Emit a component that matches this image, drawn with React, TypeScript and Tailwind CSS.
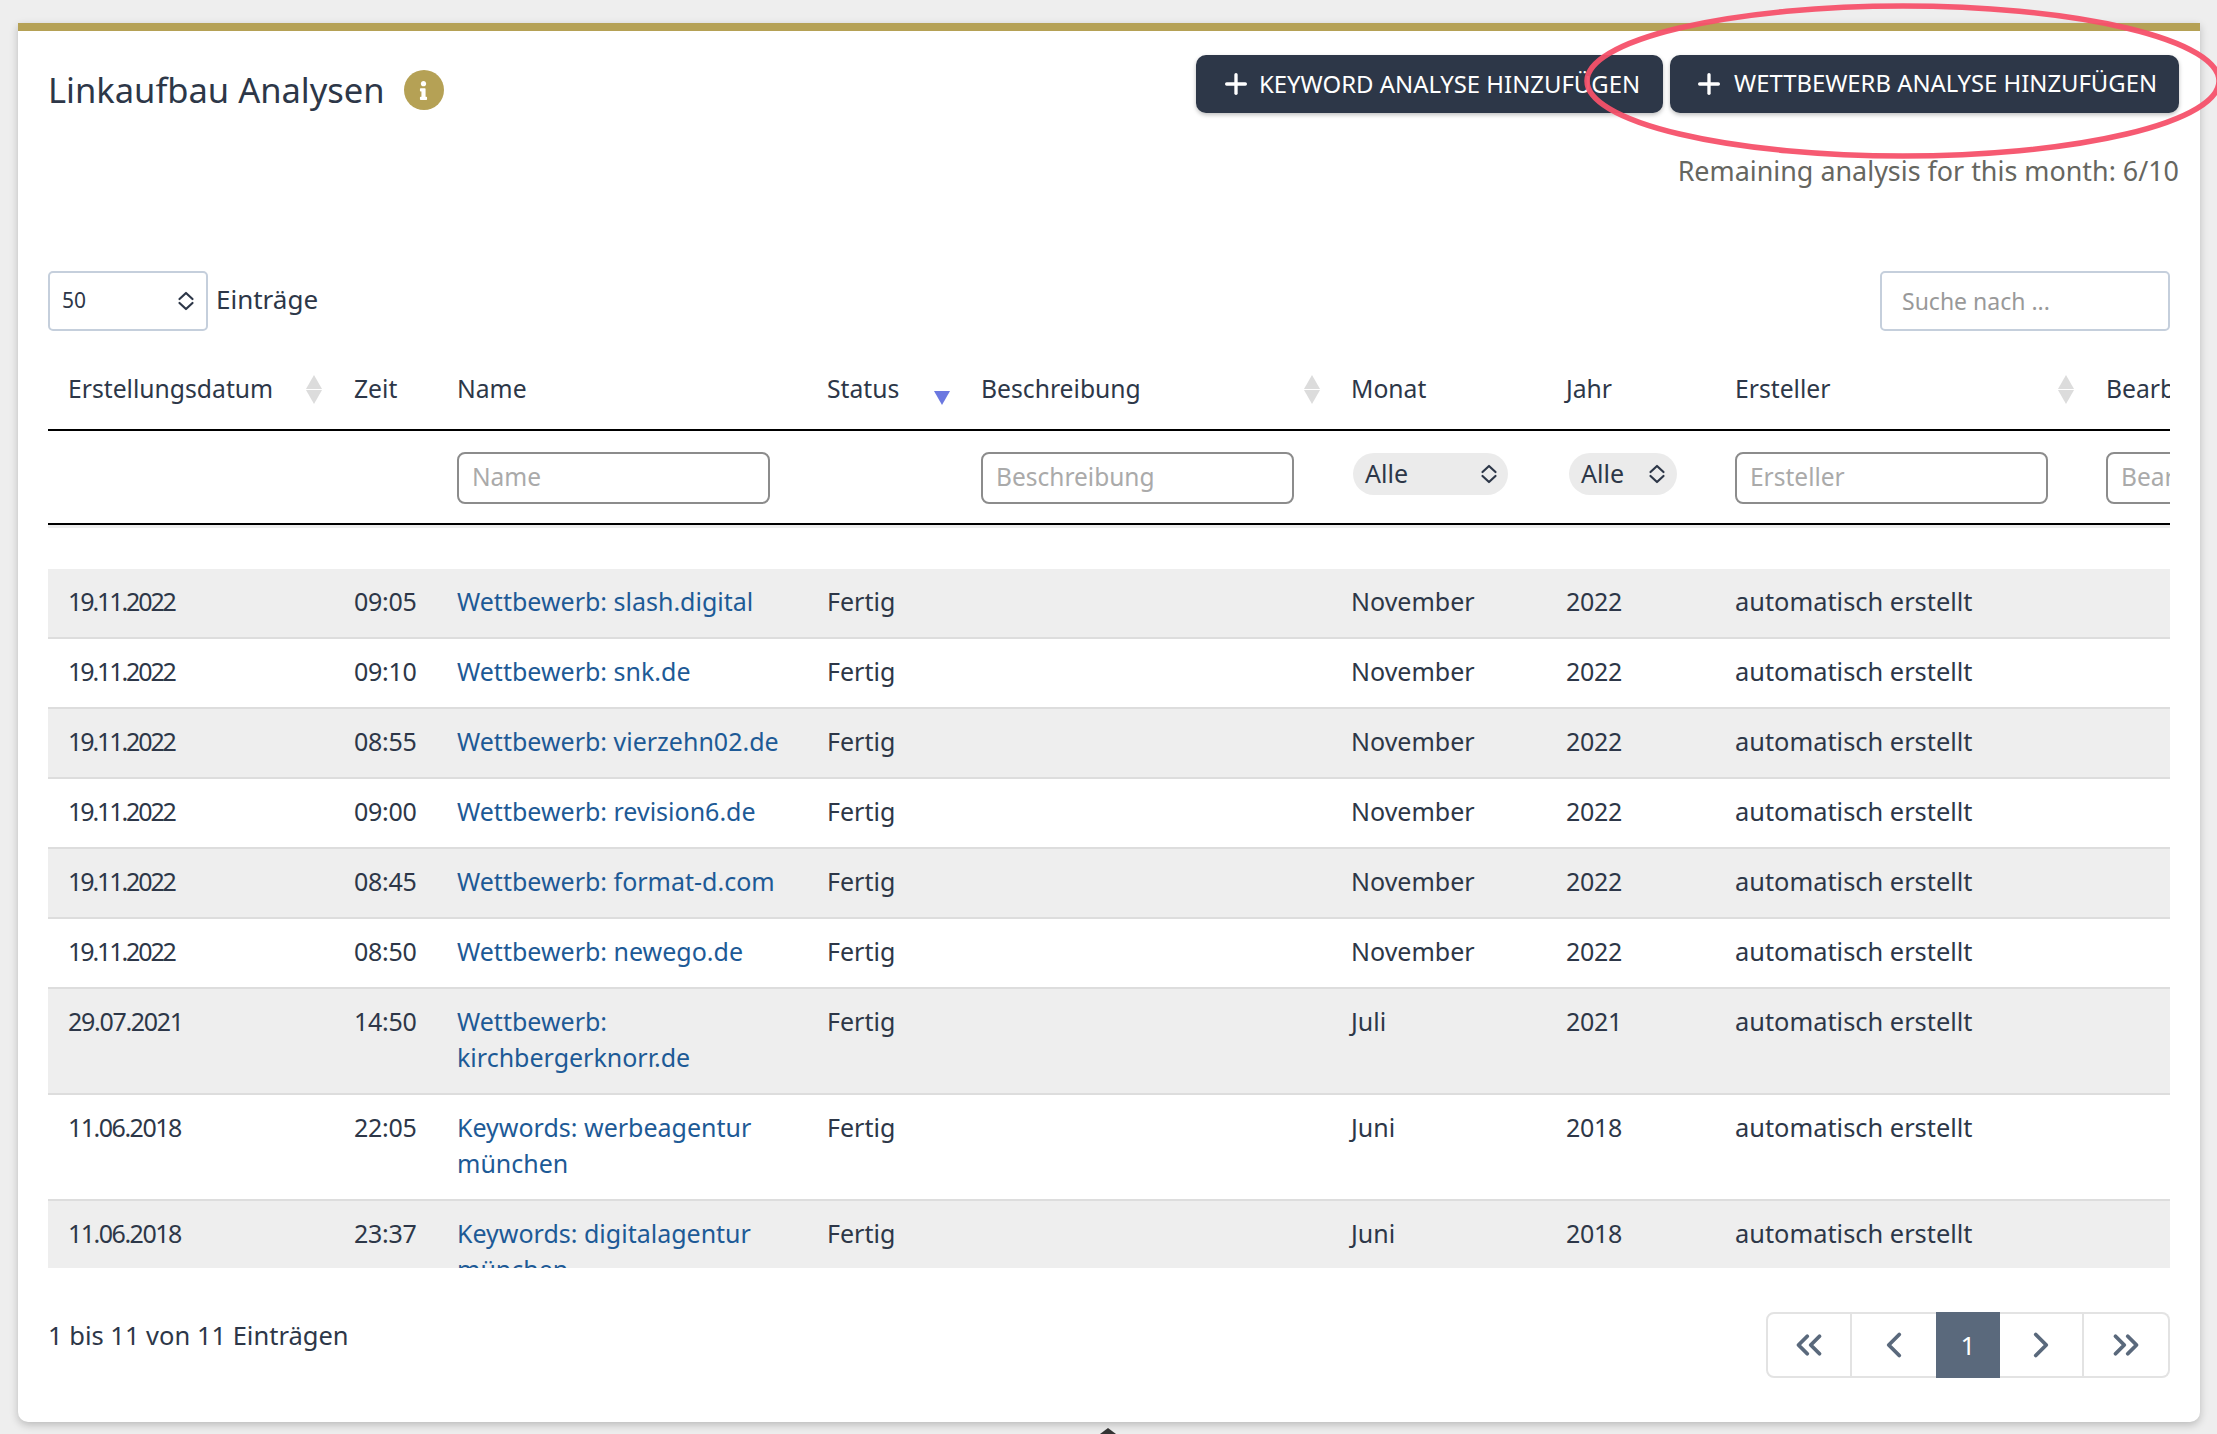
import React from "react";
import { Plus, ChevronsLeft, ChevronLeft, ChevronRight, ChevronsRight } from "lucide-react";
import { FaInfo } from "react-icons/fa";

const rows = [
  ["19.11.2022", "09:05", "Wettbewerb: slash.digital", "November", "2022"],
  ["19.11.2022", "09:10", "Wettbewerb: snk.de", "November", "2022"],
  ["19.11.2022", "08:55", "Wettbewerb: vierzehn02.de", "November", "2022"],
  ["19.11.2022", "09:00", "Wettbewerb: revision6.de", "November", "2022"],
  ["19.11.2022", "08:45", "Wettbewerb: format-d.com", "November", "2022"],
  ["19.11.2022", "08:50", "Wettbewerb: newego.de", "November", "2022"],
  ["29.07.2021", "14:50", "Wettbewerb: kirchbergerknorr.de", "Juli", "2021"],
  ["11.06.2018", "22:05", "Keywords: werbeagentur münchen", "Juni", "2018"],
  ["11.06.2018", "23:37", "Keywords: digitalagentur münchen", "Juni", "2018"],
];

function UpDown({ className }: { className?: string }) {
  return (
    <svg width="18" height="20" viewBox="0 0 18 20" fill="none" stroke="#2d3748" strokeWidth="2.2" strokeLinecap="round" strokeLinejoin="round" className={className}>
      <path d="M2.5 8 9 2 15.5 8M2.5 12 9 18 15.5 12" />
    </svg>
  );
}

function Sort({ active }: { active?: boolean }) {
  return (
    <svg width="16" height="30" viewBox="0 0 16 30" className="shrink-0">
      {!active && <path d="M8 0 16 14H0Z" fill="#dcdcdc" />}
      {active ? <path d="M0 16H16L8 30Z" fill="#6b78e0" /> : <path d="M0 15H16L8 29Z" fill="#dcdcdc" />}
    </svg>
  );
}

function Head({ label, sort, active, w }: { label: string; sort?: boolean; active?: boolean; w?: string }) {
  return (
    <th className="h-[100px] align-bottom border-b-2 border-black pl-[20px] pb-[22px] text-left text-[24.7px] font-normal">
      <div className={`relative leading-[36px] ${w ?? ""}`}>
        {label}
        {sort && (
          <span className={`absolute top-[4px] ${w === "w-[262px]" ? "left-[238px]" : w === "w-[117px]" ? "left-[107px]" : "left-[323px]"}`}>
            <Sort active={active} />
          </span>
        )}
      </div>
    </th>
  );
}

function Filter({ placeholder }: { placeholder: string }) {
  return (
    <th className="border-b-2 border-black pl-[20px] text-left font-normal align-top pt-[21px]">
      <input
        readOnly
        placeholder={placeholder}
        className="h-[52px] w-[313px] rounded-[8px] border-2 border-[#8c8c8c] px-[13px] pb-[3px] text-[24.5px] placeholder:text-[#aaaaaa] outline-none"
      />
    </th>
  );
}

function Pill({ w, gap }: { w: string; gap: string }) {
  return (
    <div className={`flex h-[42px] items-center rounded-full bg-[#ebebeb] pl-[12px] text-[25px] font-normal text-[#2d3748] ${w}`}>
      <span>Alle</span>
      <UpDown className={gap} />
    </div>
  );
}

function Blank() {
  return <th className="border-b-2 border-black" />;
}

function dateTrack(d: string) {
  if (d.startsWith("19")) return "tracking-[-2.1px]";
  if (d.startsWith("29")) return "tracking-[-1.3px]";
  return "tracking-[-1.5px]";
}

const cell = "border-b-2 border-[#dddddd] pt-[14px] pb-[18px] pl-[20px] align-top leading-[36px]";

export default function App() {
  return (
    <div className="relative h-[1434px] w-[2217px] overflow-hidden bg-[#eeeeee] pl-[18px] pt-[23px] text-[25px] text-[#2d3748] [font-family:'Noto_Sans',sans-serif]">
      <div className="h-[1399px] w-[2182px] rounded-b-[10px] border-t-[8px] border-[#b5a155] bg-white pl-[30px] pr-[21px] pt-[24px] shadow-[0_3px_8px_rgba(0,0,0,0.22)]">
        <div className="flex items-start justify-between">
          <div className="flex h-[70px] items-center gap-[19px]">
            <h1 className="text-[34.5px] font-normal leading-[44px]">Linkaufbau Analysen</h1>
            <span className="flex h-[40px] w-[40px] items-center justify-center rounded-full bg-[#b5a155] text-white">
              <FaInfo size={19} />
            </span>
          </div>
          <div className="flex gap-[7px]">
            <button className="flex h-[58px] w-[467px] items-center gap-[7px] rounded-[10px] bg-[#2d3748] pl-[24px] text-[23.9px] text-white shadow-[0_2px_4px_rgba(0,0,0,0.25)]">
              <Plus size={32} strokeWidth={2.5} />
              <span>KEYWORD ANALYSE HINZUFÜGEN</span>
            </button>
            <button className="flex h-[58px] w-[509px] items-center gap-[9px] rounded-[10px] bg-[#2d3748] pl-[23px] text-[23.85px] text-white shadow-[0_2px_4px_rgba(0,0,0,0.25)]">
              <Plus size={32} strokeWidth={2.5} />
              <span>WETTBEWERB ANALYSE HINZUFÜGEN</span>
            </button>
          </div>
        </div>
        <div className="mt-[28px] text-right text-[26.9px] leading-[36px] text-[#666660]">Remaining analysis for this month: 6/10</div>

        <div className="mr-[9px] mt-[82px] flex items-center justify-between">
          <div className="flex items-center gap-[8px]">
            <div className="flex h-[60px] w-[160px] items-center justify-between rounded-[5px] border-2 border-[#c5cfdc] pl-[12px] pr-[11px] text-[21px]">
              <span>50</span>
              <UpDown />
            </div>
            <span className="pb-[3px] text-[26px]">Einträge</span>
          </div>
          <input
            readOnly
            placeholder="Suche nach ..."
            className="h-[60px] w-[290px] rounded-[5px] border-2 border-[#c5cfdc] px-[20px] text-[23px] placeholder:text-[#999999] outline-none"
          />
        </div>

        <div className="mr-[9px] h-[937px] overflow-hidden">
          <table className="w-[2338px] table-fixed border-separate border-spacing-0">
            <colgroup>
              <col className="w-[286px]" />
              <col className="w-[103px]" />
              <col className="w-[370px]" />
              <col className="w-[154px]" />
              <col className="w-[370px]" />
              <col className="w-[215px]" />
              <col className="w-[169px]" />
              <col className="w-[371px]" />
              <col className="w-[300px]" />
            </colgroup>
            <thead>
              <tr>
                <Head label="Erstellungsdatum" sort w="w-[262px]" />
                <Head label="Zeit" />
                <Head label="Name" />
                <Head label="Status" sort active w="w-[117px]" />
                <Head label="Beschreibung" sort w="w-[347px]" />
                <Head label="Monat" />
                <Head label="Jahr" />
                <Head label="Ersteller" sort w="w-[347px]" />
                <Head label="Bearbeiter" />
              </tr>
              <tr className="h-[94px]">
                <Blank />
                <Blank />
                <Filter placeholder="Name" />
                <Blank />
                <Filter placeholder="Beschreibung" />
                <th className="border-b-2 border-black pl-[22px] align-top pt-[22px]">
                  <Pill w="w-[155px]" gap="ml-[72px]" />
                </th>
                <th className="border-b-2 border-black pl-[23px] align-top pt-[22px]">
                  <Pill w="w-[108px]" gap="ml-[24px]" />
                </th>
                <Filter placeholder="Ersteller" />
                <Filter placeholder="Bearbeiter" />
              </tr>
            </thead>
            <tbody>
              <tr>
                <td colSpan={9} className="h-[44px] p-0 align-top">
                  <div className="h-[3px] bg-[#eeeeee]" />
                </td>
              </tr>
              {rows.map((r, i) => (
                <tr key={i} className={i % 2 === 0 ? "bg-[#eeeeee]" : "bg-white"}>
                  <td className={`${cell} ${dateTrack(r[0])}`}>{r[0]}</td>
                  <td className={`${cell} tracking-[-0.3px]`}>{r[1]}</td>
                  <td className={`${cell} pr-[20px] text-[#1d5a96]`}>{r[2]}</td>
                  <td className={cell}>Fertig</td>
                  <td className={cell} />
                  <td className={cell}>{r[3]}</td>
                  <td className={`${cell} tracking-[-0.3px]`}>{r[4]}</td>
                  <td className={`${cell} text-[25.4px]`}>automatisch erstellt</td>
                  <td className="border-b-2 border-[#dddddd]" />
                </tr>
              ))}
            </tbody>
          </table>
        </div>

        <div className="mr-[9px] mt-[44px] flex items-start justify-between">
          <span className="pt-[5px] text-[25.5px] leading-[36px]">1 bis 11 von 11 Einträgen</span>
          <div className="flex h-[66px] w-[404px] items-stretch text-[#5a697c]">
            <span className="flex w-[86px] items-center justify-center rounded-l-[8px] border-2 border-[#e3e3e3]">
              <ChevronsLeft size={42} strokeWidth={2.2} />
            </span>
            <span className="flex w-[84px] items-center justify-center border-y-2 border-[#e3e3e3]">
              <ChevronLeft size={42} strokeWidth={2.2} />
            </span>
            <span className="flex w-[64px] items-center justify-center bg-[#5a697c] text-[26px] text-white">1</span>
            <span className="flex w-[84px] items-center justify-center border-y-2 border-r-2 border-[#e3e3e3]">
              <ChevronRight size={42} strokeWidth={2.2} />
            </span>
            <span className="flex w-[86px] items-center justify-center rounded-r-[8px] border-y-2 border-r-2 border-[#e3e3e3]">
              <ChevronsRight size={42} strokeWidth={2.2} />
            </span>
          </div>
        </div>
      </div>

      <svg width="660" height="170" viewBox="0 0 660 170" fill="none" className="pointer-events-none absolute left-[1570px] top-0">
        <ellipse cx="333" cy="81" rx="316" ry="75" stroke="#f5516a" strokeOpacity="0.95" strokeWidth="5.5" />
      </svg>
      <svg width="16" height="6" viewBox="0 0 16 6" className="absolute left-[1100px] top-[1428px]">
        <path d="M8 0 16 6H0Z" fill="#333333" />
      </svg>
    </div>
  );
}
